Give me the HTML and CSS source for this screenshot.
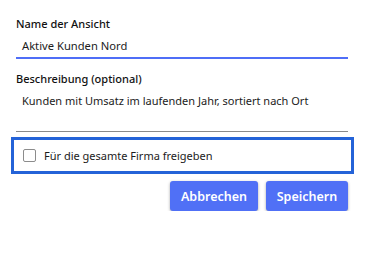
FILE: index.html
```html
<!DOCTYPE html>
<html lang="de">
<head>
<meta charset="utf-8">
<link rel="stylesheet" href="styles.css">
</head>
<body>
<div class="form">
  <div class="label first">Name der Ansicht</div>
  <div class="input">Aktive Kunden Nord</div>
  <div class="label second">Beschreibung (optional)</div>
  <div class="textarea">Kunden mit Umsatz im laufenden Jahr, sortiert nach Ort</div>
  <label class="check">
    <span class="box"></span>
    <span class="check-text">Für die gesamte Firma freigeben</span>
  </label>
  <div class="actions">
    <button class="btn cancel">Abbrechen</button>
    <button class="btn save">Speichern</button>
  </div>
</div>
</body>
</html>
```
FILE: styles.css
```css
html, body {
  margin: 0;
  padding: 0;
  background: #ffffff;
}
.form {
  width: 332px;
  padding: 0 32px 0 16px;
  font-family: "Noto Sans", "Open Sans", sans-serif;
  color: #1b1b1b;
}
.label {
  font-size: 11px;
  line-height: 16px;
  font-weight: 500;
  color: #111111;
}
.label.first {
  padding-top: 16px;
}
.input {
  margin-top: 6px;
  padding-left: 6px;
  height: 19px;
  font-size: 11.2px;
  line-height: 16px;
  border-bottom: 2px solid #4f6ef7;
}
.label.second {
  margin-top: 12px;
}
.textarea {
  margin-top: 6px;
  padding-left: 6px;
  height: 38px;
  font-size: 11px;
  line-height: 16px;
  border-bottom: 1px solid #8a8a8a;
}
.check {
  display: flex;
  align-items: center;
  margin: 5px -6px 0 -5px;
  height: 31px;
  border: 3px solid #2463d8;
  padding-left: 9px;
}
.box {
  width: 11px;
  height: 11px;
  border: 1px solid #8c8c8c;
  border-radius: 2px;
  background: #fff;
}
.check-text {
  margin-left: 8px;
  font-size: 11px;
  line-height: 16px;
}
.actions {
  display: flex;
  justify-content: flex-end;
  gap: 8px;
  margin-top: 7px;
}
.btn {
  height: 30px;
  border: none;
  border-radius: 3px;
  background: #5070f6;
  color: #ffffff;
  font-family: "Noto Sans", "Open Sans", sans-serif;
  font-size: 12.5px;
  font-weight: 600;
  padding: 0;
  box-shadow: 0 1px 3px rgba(0, 0, 0, 0.35);
}
.cancel { width: 88px; }
.save { width: 82px; }
```
